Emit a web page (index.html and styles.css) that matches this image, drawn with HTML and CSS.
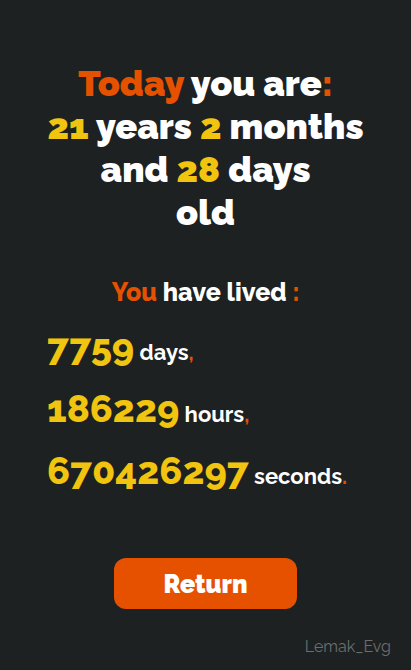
FILE: index.html
```html
<!DOCTYPE html>
<html lang="en">
<head>
<meta charset="utf-8">
<meta name="viewport" content="width=device-width, initial-scale=1">
<title>Age calculator</title>
<link rel="stylesheet" href="styles.css">
</head>
<body>
<main class="page">
  <h1 class="title"><span class="accent">Today</span> you are<span class="accent">:</span><br><span class="value">21</span> years <span class="value">2</span> months<br>and <span class="value">28</span> days<br>old</h1>
  <h2 class="subtitle"><span class="accent">You</span> have lived <span class="accent">:</span></h2>
  <ul class="totals">
    <li><span class="number">7759</span> days<span class="accent">,</span></li>
    <li><span class="number">186229</span> hours<span class="accent">,</span></li>
    <li><span class="number">670426297</span> seconds<span class="accent">.</span></li>
  </ul>
  <button class="return" type="button">Return</button>
</main>
<footer class="credit">Lemak_Evg</footer>
</body>
</html>
```

FILE: styles.css
```css
* { box-sizing: border-box; }
body {
  margin: 0;
  min-height: 100vh;
  display: flex;
  flex-direction: column;
  background: #1e2122;
  color: #fff;
  font-family: Raleway, Lato, "Open Sans", sans-serif;
}
.page {
  display: flex;
  flex-direction: column;
  align-items: center;
  padding: 62px 32px 0;
}
.title {
  margin: 0;
  font-size: 36px;
  line-height: 43px;
  font-weight: 900;
  text-align: center;
  white-space: nowrap;
}
.accent { color: #e65100; }
.value, .number { color: #f1c40f; }
.subtitle {
  margin: 42px 0 0;
  font-size: 25px;
  line-height: 32px;
  font-weight: 800;
}
.totals {
  align-self: stretch;
  display: grid;
  gap: 13px;
  margin: 15px 0 0;
  padding: 0 15px;
  list-style: none;
  font-size: 22px;
  font-weight: 700;
  line-height: 40px;
  white-space: nowrap;
}
.number {
  font-size: 38px;
  line-height: 48px;
  font-weight: 800;
}
.return {
  width: 183px;
  height: 51px;
  margin-top: 62px;
  padding: 0;
  border: 0;
  border-radius: 12px;
  background: #e65100;
  color: #fff;
  font: inherit;
  font-size: 25px;
  font-weight: 900;
  cursor: pointer;
}
.credit {
  margin-top: auto;
  padding: 0 20px 12px;
  color: #6b6e6f;
  font-size: 16px;
  line-height: 22px;
  text-align: right;
}
```
